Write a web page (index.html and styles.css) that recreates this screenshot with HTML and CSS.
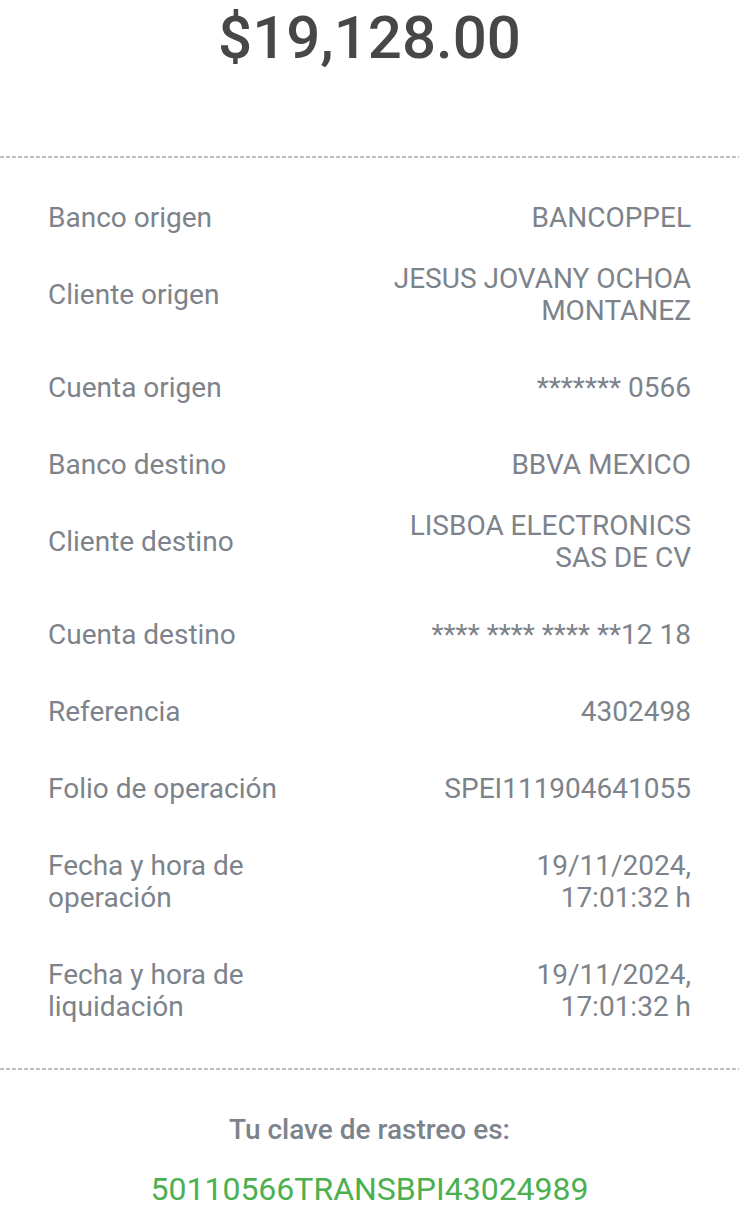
FILE: index.html
```html
<!DOCTYPE html>
<html lang="es">
<head>
    <meta charset="UTF-8">
    <meta name="viewport" content="width=device-width, initial-scale=1.0">
    <title>Comprobante de transferencia</title>
    <link rel="stylesheet" href="styles.css">
</head>
<body>
    <div id="receipt">
        <div class="amount">$19,128.00</div>

        <div class="divider"></div>

        <div class="details">
            <div class="row">
                <div class="label">Banco origen</div>
                <div class="value">BANCOPPEL</div>
            </div>
            <div class="row wrapped">
                <div class="label">Cliente origen</div>
                <div class="value">JESUS JOVANY OCHOA<br>MONTANEZ</div>
            </div>
            <div class="row">
                <div class="label">Cuenta origen</div>
                <div class="value">******* 0566</div>
            </div>
            <div class="row">
                <div class="label">Banco destino</div>
                <div class="value">BBVA MEXICO</div>
            </div>
            <div class="row wrapped">
                <div class="label">Cliente destino</div>
                <div class="value">LISBOA ELECTRONICS<br>SAS DE CV</div>
            </div>
            <div class="row">
                <div class="label">Cuenta destino</div>
                <div class="value">**** **** **** **12 18</div>
            </div>
            <div class="row">
                <div class="label">Referencia</div>
                <div class="value">4302498</div>
            </div>
            <div class="row">
                <div class="label">Folio de operación</div>
                <div class="value">SPEI111904641055</div>
            </div>
            <div class="row">
                <div class="label">Fecha y hora de<br>operación</div>
                <div class="value">19/11/2024,<br>17:01:32 h</div>
            </div>
            <div class="row">
                <div class="label">Fecha y hora de<br>liquidación</div>
                <div class="value">19/11/2024,<br>17:01:32 h</div>
            </div>
        </div>

        <div class="divider"></div>

        <div class="tracking">
            <div class="tracking-title">Tu clave de rastreo es:</div>
            <div class="tracking-code">50110566TRANSBPI43024989</div>
        </div>
    </div>
</body>
</html>
```

FILE: styles.css
```css
body {
    font-family: Roboto, "Noto Sans", Arial, sans-serif;
    background: #fff;
    color: #7d838b;
    margin: 0;
    padding: 0;
}
#receipt {
    width: 739px;
}
.amount {
    text-align: center;
    font-size: 60px;
    font-weight: 500;
    line-height: 1;
    color: #474747;
    padding-top: 8px;
    height: 156px;
    box-sizing: border-box;
}
.divider {
    height: 2px;
    background: repeating-linear-gradient(to right, #bdbdbd 0, #bdbdbd 4px, transparent 4px, transparent 6px);
}
.details {
    display: flex;
    flex-direction: column;
    gap: 45px;
    padding: 44px 48px 45px;
}
.row {
    display: flex;
    justify-content: space-between;
    align-items: center;
    font-size: 28px;
    line-height: 32px;
}
/* rows whose value wraps sit closer to the row above */
.row.wrapped {
    margin-top: -16px;
}
.label {
    text-align: left;
}
.value {
    text-align: right;
}
.tracking {
    text-align: center;
    padding-top: 44px;
}
.tracking-title {
    font-size: 28px;
    font-weight: 500;
    line-height: 32px;
}
.tracking-code {
    margin-top: 25px;
    font-size: 32px;
    line-height: 36px;
    color: #4caf50;
}
```
